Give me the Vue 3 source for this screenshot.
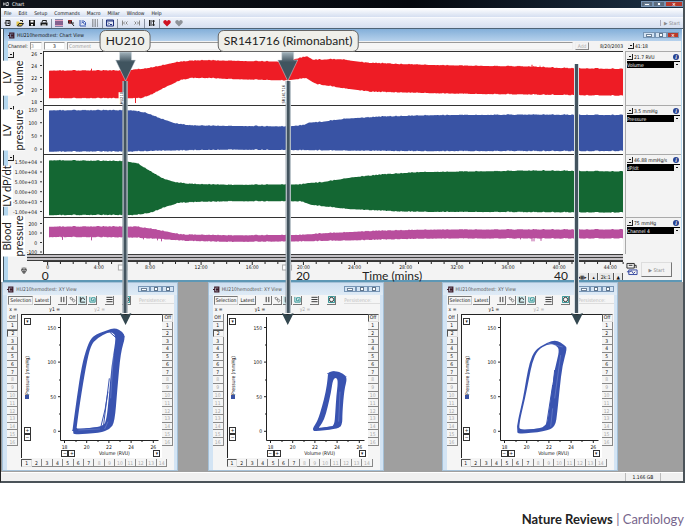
<template>
  <div class="page">
    <main class="app">
      <header class="app-title">
        <svg class="app-icon" viewBox="0 0 8 6"><path d="M1 1v4M1 3h2M4 1v4h3M5 1h2v4" /></svg>
        <span>Chart</span>
        <div class="window-buttons dark">
          <button aria-label="Minimize"><i class="line"></i></button>
          <button aria-label="Restore"><i class="box"></i></button>
          <button class="close" aria-label="Close">×</button>
        </div>
      </header>

      <nav class="menu">
        <button v-for="item in menu" :key="item">{{ item }}</button>
      </nav>

      <div class="toolbar">
        <template v-for="(icon, i) in tools" :key="i">
          <span v-if="icon === '|'" class="separator"></span>
          <button v-else class="tool" :aria-label="icon">
            <svg viewBox="0 0 16 16">
              <g v-if="icon === 'chart'"><path class="ink" d="M4 2v12M4 3h8v10H4M1 8h3M7 6h4M7 9h4" /></g>
              <g v-else-if="icon === 'open'"><path class="yellow" d="M1 5h5l1 2h7l-3 7H1z" /><path class="ink" d="M3 14l3-5h9l-4 5zM8 3h5v3" /></g>
              <g v-else-if="icon === 'save'"><path class="black" d="M2 2h12v12H2z" /><path class="white" d="M5 3h6v4H5zM6 10h4v3H6z" /></g>
              <g v-else-if="icon === 'print'"><path class="black" d="M1 7h14v6H1z" /><path class="ink" d="M4 7l1-4h8l-1 4" /><path class="white" d="M4 11h8v2H4z" /></g>
              <g v-else-if="icon === 'channels'"><path class="navy-fill" d="M0 1h16v14H0z" /><path class="pink" d="M0 2h16v3H0zM0 7h16v2H0zM0 11h16v3H0z" /></g>
              <g v-else-if="icon === 'find'"><path class="red" d="M2 2h8v7H2z" /><path class="ink" d="M3 4h6v4H3zM9 8l5 6M10 8h4" /></g>
              <g v-else-if="icon === 'xy'"><path class="blue" d="M2 2v12h12M5 4h5l3 3v5M5 8l3-2 3 5" /></g>
              <g v-else-if="icon === 'grid'"><path class="dash" d="M2 2h12M2 6h12M2 10h12M2 14h12" /></g>
              <g v-else-if="icon === 'panel'"><path class="navy" d="M1 2h14v12H1zM2 4h12M4 7l2 2-2 2M8 11h4" /></g>
              <g v-else-if="icon === 'first'"><path class="gray" d="M3 3v10M8 5L5 8l3 3M13 5l-3 3 3 3" /></g>
              <g v-else-if="icon === 'last'"><path class="gray" d="M13 3v10M3 5l3 3-3 3M8 5l3 3-3 3" /></g>
              <g v-else-if="icon === 'split'"><path class="ink" d="M3 2v12M6 2v12M11 3v10M9 5l2-3 2 3M9 11l2 3 2-3" /></g>
              <path v-else :class="icon" d="M8 15L1 8q-2-6 4-6 2 0 3 3 1-3 3-3 6 0 4 6z" />
            </svg>
          </button>
        </template>
        <button class="start-link" disabled>▶ <span>Start</span></button>
      </div>

      <section class="chart-window">
        <header class="window-title">
          <svg class="window-icon" viewBox="0 0 12 12"><path d="M3 1v10M3 2h7v8H3M0 6h3M5 5h4M5 7h4" /></svg>
          <span>HU210hemodtest: Chart View</span>
          <div class="window-buttons">
            <button aria-label="Minimize"><i class="line"></i></button>
            <button aria-label="Maximize"><i class="box"></i></button>
            <button class="close" aria-label="Close">×</button>
          </div>
        </header>

        <div class="comment-bar">
          <label for="channel">Channel:</label>
          <input id="channel" class="short" value="3" disabled />
          <input class="mid" value="3" aria-label="Number" />
          <input class="comment" placeholder="Comment" aria-label="Comment" />
          <button class="add" disabled>Add</button>
          <span class="date">8/20/2003</span>
          <div class="clock"><button class="drop" aria-label="Time options"></button>41:18</div>
        </div>

        <div v-for="ch in channels" :key="ch.name" class="channel" :class="ch.key">
          <div class="scale">
            <svg class="scale-svg">
              <g v-for="t in ch.ticks" :key="t.label">
                <text x="29" :y="t.y - ch.top + 2" text-anchor="end">{{ t.label }}</text>
                <path :d="`M32 ${t.y - ch.top}h2`" />
              </g>
            </svg>
            <button class="drop scale-menu" aria-label="Scale options"></button>
            <div class="side-label">
              <span v-for="line in ch.side" :key="line">{{ line }}</span>
            </div>
          </div>
          <svg class="trace" :viewBox="`43 ${ch.top} 579 ${ch.height}`" preserveAspectRatio="none">
            <path :d="ch.path" :fill="ch.color" />
            <path v-if="ch.spikes" :d="ch.spikes" :stroke="ch.color" />
          </svg>
          <div class="channel-panel">
            <div class="reading">
              <button class="drop" aria-label="Range"></button>
              <span>{{ ch.value }}</span>
              <i class="info">i</i>
            </div>
            <select :aria-label="ch.name"><option>{{ ch.name }}</option></select>
          </div>
        </div>

        <div class="dividers"><i></i><i></i><i></i></div>

        <div class="time-row">
          <div class="plug">
            <svg viewBox="0 0 10 12"><path d="M2 1v4M5 0v4M8 1v4M1 4h8v3H1zM3 7h4v3H3zM5 9v3" /></svg>
          </div>
          <div class="time-scale">
            <svg class="time-svg">
              <g v-for="t in times" :key="t.x">
                <line :x1="t.x + '%'" :x2="t.x + '%'" y1="0" :y2="t.label ? 3 : 2" />
                <text v-if="t.label" :x="t.x + '%'" y="7">{{ t.label }}</text>
              </g>
              <rect v-for="x in [13, 41.3]" :key="x" class="flag" :x="x + '%'" y="3" width="9" height="5" />
              <text v-for="t in bigTimes" :key="t.label" class="big" :x="t.x + '%'" y="18">{{ t.label }}</text>
            </svg>
            <div class="zoomers">
              <button>◂▩▸</button><button>▴</button><button>2k:1</button><button>▲</button>
            </div>
          </div>
          <div class="record">
            <svg viewBox="0 0 13 14"><path d="M1 1h8v5H1zM3 3h4M9 3h2v3" /><path class="screen" d="M3 8h9v5H3zM1 10h3l2-1 2 3 2-2" /></svg>
            <button disabled>▶ <span>Start</span></button>
          </div>
        </div>
      </section>

      <section class="desktop">
        <article v-for="(w, n) in loops" :key="n" class="xy-window" :style="{ left: w.left + '%' }">
          <header class="window-title pale">
            <svg class="window-icon" viewBox="0 0 12 12"><path d="M3 1v10M3 2h7v8H3M0 6h3M5 5h4M5 7h4" /></svg>
            <span>HU210hemodtest: XY View</span>
            <div class="window-buttons">
              <button aria-label="Minimize"><i class="line"></i></button>
              <button aria-label="Maximize"><i class="box"></i></button>
              <button aria-label="Close"><i class="box"></i></button>
            </div>
          </header>
          <div class="xy-tools">
            <button class="pressed">Selection</button>
            <button>Latest</button>
            <button class="icon first" aria-label="Pause"><svg viewBox="0 0 16 16"><path d="M5 2v12M11 2v12" /></svg></button>
            <button class="icon" aria-label="Link"><svg viewBox="0 0 16 16"><path class="gray" d="M2 4l4-1 3 4-4 2zM7 8l4-1 3 4-4 3z" /></svg></button>
            <button class="icon on" aria-label="Curve"><svg viewBox="0 0 16 16"><path d="M3 2v12h11M4 11q0-8 6-7l3 5" /></svg></button>
            <button class="icon" aria-label="Loop"><svg viewBox="0 0 16 16"><path class="teal" d="M2 2v12h12V4H6v7h5V7" /></svg></button>
            <button class="icon lines" aria-label="Grid"><svg viewBox="0 0 16 16"><path d="M1 3h14M1 8h14M1 13h14" /></svg></button>
            <button class="icon lens" aria-label="Zoom"><svg viewBox="0 0 16 16"><path class="teal" d="M1 1h14v14H1z" /><circle cx="8" cy="8" r="5" /></svg></button>
            <span class="persistence">Persistence:</span>
          </div>
          <div class="xy-values"><span>x =</span><span>y1 =</span><span class="faint">y2 =</span></div>
          <div class="xy-body">
            <div class="rail">
              <button v-for="b in rail" :key="b" :class="{ faint: b > 7, pressed: b === 2 }">{{ b }}</button>
            </div>
            <div class="xy-plot">
              <div class="axis-tools">
                <button class="mini" aria-label="Pressure options">▾</button>
                <span class="axis-name">Pressure (mmHg)</span>
                <i class="swatch"></i>
                <button class="mini plus" aria-label="Zoom in">+</button>
                <button class="mini" aria-label="Zoom out">−</button>
              </div>
              <svg class="loop" viewBox="12 0 130 135">
                <path class="axis" d="M40.500 2v123.500h98" />
                <g v-for="t in pressureTicks" :key="t.label">
                  <path class="axis" :d="`M38 ${t.y}h2.500`" />
                  <text x="36" :y="t.y + 2" text-anchor="end">{{ t.label }}</text>
                </g>
                <path class="axis" d="M39 30h1.500M39 65h1.500M39 99h1.500" />
                <g v-for="t in volumeTicks" :key="t.label">
                  <path class="axis" :d="`M${t.x} 125.500v2.500`" />
                  <text :x="t.x" y="134" text-anchor="middle">{{ t.label }}</text>
                </g>
                <path class="axis" d="M56 125.500v1.500M78 125.500v1.500M100 125.500v1.500M122 125.500v1.500" />
                <g transform="scale(.33333)">
                  <path class="ring" :d="smooth(w.outer) + smooth(w.inner)" />
                  <path class="strand" :d="w.strands" />
                  <path class="gap" :d="w.gaps" />
                </g>
              </svg>
              <div class="volume-tools">
                <button class="mini" aria-label="Zoom out">−</button>
                <button class="mini" aria-label="Zoom in">+</button>
                <span>Volume (RVU)</span>
                <button class="mini" aria-label="Volume options">▾</button>
              </div>
            </div>
            <div class="rail">
              <button v-for="b in rail" :key="b" :class="{ faint: b > 7, pressed: b === 'Off' }">{{ b }}</button>
            </div>
          </div>
          <div class="tabs">
            <button v-for="b in 14" :key="b" :class="{ faint: b > 7, pressed: b === 1 }">{{ b }}</button>
          </div>
        </article>
      </section>

      <footer class="status"><span></span><span class="size">1.166 GB</span><span></span></footer>

      <div v-for="m in markers" :key="m.left" class="marker" :class="{ plain: !m.label }" :style="{ left: m.left + '%' }">
        <div v-if="m.label" class="callout">{{ m.label }}</div>
        <svg v-if="m.label" class="head" viewBox="0 0 22 29">
          <defs>
            <linearGradient :id="'fade' + m.tag" x1="0" y1="0" x2="0" y2="1">
              <stop offset="0" stop-color="#a4b4bd" />
              <stop offset=".35" stop-color="#40545f" />
            </linearGradient>
          </defs>
          <path :fill="`url(#fade${m.tag})`" stroke="#d5dde2" stroke-width=".5" d="M5 0h12v8h4L11 29 1 8h4z" />
        </svg>
        <div class="shaft"></div>
        <svg class="tip" viewBox="0 0 12 12"><path d="M0 0l6 2 6-2-6 12z" /></svg>
        <span v-if="m.tag" class="tag">{{ m.tag }}</span>
      </div>
    </main>

    <p class="credit"><b>Nature Reviews</b> <span>| Cardiology</span></p>
  </div>
</template>

<script setup>
const menu = ['File', 'Edit', 'Setup', 'Commands', 'Macro', 'Millar', 'Window', 'Help'];
const tools = ['chart', 'open', 'save', 'print', '|', 'channels', 'find', 'xy', 'grid', '|', 'panel', '|', 'first', 'last', '|', 'split', '|', 'heart', 'heart-off'];
const rail = ['Off', ...Array.from({ length: 16 }, (_, i) => i + 1)];

const markers = [
  { left: 18.2, label: 'HU210', tag: 'HU210' },
  { left: 42.1, label: 'SR141716 (Rimonabant)', tag: 'SR141716' },
  { left: 84.4, label: '', tag: '' }
];

// height of a trace edge at x, linear between its points
function at(points, x) {
  for (let i = 1; i < points.length; i++) {
    const [x0, y0] = points[i - 1];
    const [x1, y1] = points[i];
    if (x <= x1) return y0 + ((y1 - y0) * (x - x0)) / (x1 - x0);
  }
  return points[points.length - 1][1];
}

// closed area between two edges, with a little signal noise
function band(top, bottom) {
  const up = [];
  const down = [];
  for (let x = 48; x <= 622; x++) {
    const noise = Math.abs(Math.sin(x * 12.9898) * 43758.5453) % 1;
    const jag = noise > 0.8 ? 0.7 : noise * 0.3;
    up.push(`${x} ${(at(top, x) - jag).toFixed(1)}`);
    down.unshift(`${x} ${(at(bottom, x) + 0.7 - jag).toFixed(1)}`);
  }
  return `M${up.join('L')}L${down.join('L')}Z`;
}

function ticks(labels, first, step) {
  return labels.map((label, i) => ({ label, y: first + i * step }));
}

const channels = [
  {
    key: 'one', name: 'Volume', value: '21.7 RVU', side: ['LV', 'volume'], top: 51, height: 54, color: '#ee1c25',
    ticks: ticks(['26', '24', '22', '20', '18'], 53.5, 12),
    path: band(
      [[48, 70], [125, 70], [140, 68.5], [150, 67], [160, 65], [175, 61.5], [190, 60], [205, 59.5], [225, 60], [282, 61], [295, 58], [306, 55.5], [312, 59], [340, 58.5], [365, 62], [400, 63.5], [458, 65], [530, 66], [560, 67.5], [622, 68.5]],
      [[48, 97.5], [140, 97.5], [150, 94], [165, 86], [180, 79], [190, 77], [210, 77], [228, 78], [285, 79.5], [305, 77], [315, 83], [340, 87], [370, 91], [458, 93], [622, 95]]
    ),
    spikes: 'M134.500 97v6M90.500 71v-3M531 66v-2M539 66v-1'
  },
  {
    key: 'two', name: 'Pressure', value: '3.5 mmHg', side: ['LV', 'pressure'], top: 105, height: 49, color: '#3953a4',
    ticks: ticks(['150', '100', '50', '0'], 109.5, 13.2),
    path: band(
      [[48, 109.5], [130, 109.5], [145, 112], [160, 118], [175, 123], [190, 125], [230, 125.5], [287, 126], [303, 124.5], [308, 122], [320, 121.5], [345, 118], [380, 116], [430, 114.5], [540, 114], [622, 114.5]],
      [[48, 151], [130, 151], [160, 150], [230, 149], [303, 149.5], [400, 150.5], [622, 150.5]]
    )
  },
  {
    key: 'three', name: 'dP/dt', value: '46.88 mmHg/s', side: ['LV dP/dt'], top: 154, height: 63, color: '#146733',
    ticks: ticks(['1.50e+04', '1.00e+04', '5.00e+03', '0.00e+00', '-5.00e+03', '-1.00e+04'], 162, 9.9),
    path: band(
      [[48, 159.5], [125, 160.5], [137, 163], [150, 171], [162, 178], [175, 182], [190, 183.5], [230, 184.5], [300, 184], [308, 182.5], [320, 182], [350, 177], [380, 174], [420, 171.5], [540, 170], [622, 171]],
      [[48, 214.5], [135, 214.5], [150, 212], [165, 206], [178, 202], [200, 201], [230, 200.5], [300, 200.5], [310, 204], [325, 206], [350, 208.5], [400, 211], [622, 212]]
    )
  },
  {
    key: 'four', name: 'Channel 4', value: '75 mmHg', side: ['Blood', 'pressure'], top: 217, height: 37, color: '#b84e9d',
    ticks: ticks(['200', '100', '0', '-100'], 223.5, 9.5),
    path: band(
      [[48, 226], [135, 226], [150, 228], [165, 231], [180, 234], [230, 235], [300, 234.5], [320, 233], [370, 230.5], [430, 229], [622, 229]],
      [[48, 236], [130, 236.5], [160, 238], [185, 240], [230, 241], [300, 240.5], [370, 239], [430, 237.5], [622, 237.5]]
    ),
    spikes: 'M61.500 236v3.500M90.500 236v4M142.500 236v3M156.500 237v3M160.500 238v3M519.500 237v2M531 237v4M533 237v4M540 237v3.500'
  }
];

// a tick each minute, labelled every four
const times = Array.from({ length: 46 }, (_, m) => ({
  x: 0.8 + m * 2.205,
  label: m % 4 ? '' : m ? m + ':00' : '0'
}));
const bigTimes = [
  { x: 0.4, label: '0' },
  { x: 44.8, label: '20' },
  { x: 60.2, label: 'Time (mins)' },
  { x: 89.3, label: '40' }
];

const pressureTicks = ticks(['150', '100', '50', '0'], 12.5, 34.6);
const volumeTicks = ['18', '20', '22', '24', '26'].map((label, i) => ({ label, x: 44.5 + i * 22.2 }));

// closed curve through the midpoints of a polygon
function smooth(text) {
  const p = text.split(' ').map((s) => s.split(',').map(Number));
  const mid = (a, b) => `${(a[0] + b[0]) / 2} ${(a[1] + b[1]) / 2}`;
  let d = `M${mid(p[p.length - 1], p[0])}`;
  p.forEach((a, i) => {
    d += `Q${a[0]} ${a[1]} ${mid(a, p[(i + 1) % p.length])}`;
  });
  return d + 'Z';
}

const loops = [
  {
    left: 0.2,
    outer: '158,345 158,340 170,252 185,152 202,92 218,62 260,46 285,38 308,50 316,67 302,112 292,222 284,322 270,342 240,354 160,359 160,350',
    inner: '170,342 170,336 180,262 198,152 212,92 230,70 268,50 285,57 287,77 274,152 267,242 260,312 250,336',
    strands: 'M156 346L250 336M250 337Q258 270 268 190M242 338Q258 280 264 230M270 52L292 72M300 54L314 66',
    gaps: 'M280 120L272 250M264 320L254 342M175 345L240 342'
  },
  {
    left: 30.3,
    outer: '261,344 261,338 275,317 289,272 299,232 305,192 306,172 327,167 352,175 364,190 355,222 349,292 349,334 327,342 265,350',
    inner: '276,339 282,334 295,312 305,277 315,232 321,192 332,187 336,202 331,242 328,292 325,332 309,336',
    strands: 'M262 343L345 332M304 176L325 170M360 184L350 210',
    gaps: 'M342 230L338 320'
  },
  {
    left: 64.6,
    outer: '171,335 172,330 176,306 189,251 199,191 209,141 224,106 259,83 289,74 314,91 322,99 307,151 299,221 292,291 286,336 254,349 172,358 172,345',
    inner: '178,344 178,330 182,306 195,251 207,191 217,141 232,106 264,86 289,90 299,106 284,161 275,231 266,291 260,336 214,343',
    strands: 'M266 338L284 165M258 339L278 210M285 83L315 98M176 348L250 341',
    gaps: 'M302 120L284 250M278 280L272 335M262 84L308 96'
  }
];
</script>

<style>
body {
  margin: 0;
  background: #fff;
}
</style>

<style scoped>
.page {
  font-family: "DejaVu Sans Condensed", "DejaVu Sans", sans-serif;
  font-size: 5px;
  line-height: 6px;
  color: #111;
}

button,
input,
select {
  font: inherit;
  color: inherit;
  margin: 0;
  padding: 0;
  border: 0;
  background: none;
  border-radius: 0;
  box-sizing: border-box;
}

svg {
  display: block;
  fill: none;
}

.app {
  position: relative;
  border-right: 2px solid #4b5359;
  border-bottom: 2px solid #4b5359;
  border-left: 1px solid #222;
}

/* main window bars */
.app-title {
  display: flex;
  align-items: center;
  gap: 3px;
  height: 8px;
  padding-left: 2px;
  background: linear-gradient(90deg, #11151b, #05080e 60%, #1c3044);
  color: #fff;
}

.app-icon {
  width: 6px;
  height: 6px;
  stroke: #fff;
}

.window-buttons {
  display: flex;
  margin-left: auto;
  margin-right: 3px;
}

.window-buttons button {
  display: flex;
  align-items: center;
  justify-content: center;
  width: 12px;
  height: 6px;
  border: 1px solid #7795b5;
  background: #d3e3f3;
}

.window-buttons .close {
  background: #b8392b;
  color: #fff;
  font-weight: bold;
}

.dark {
  margin-right: 0;
}

.dark button {
  background: #5c6b7c;
}

.dark .close {
  width: 18px;
}

.line {
  width: 4px;
  height: 1px;
  background: #fff;
  outline: 1px solid #6b8199;
}

.box {
  width: 2px;
  height: 2px;
  background: #fff;
  border: 1px solid #60758c;
}

.menu {
  display: flex;
  gap: 7px;
  height: 9px;
  padding-left: 3px;
  background: linear-gradient(#fff, #d5dff1);
  border-bottom: 1px solid #f7f9fd;
}

.toolbar {
  display: flex;
  align-items: center;
  gap: 4px;
  height: 10px;
  padding-left: 3px;
  background: linear-gradient(#eef2fa, #d6dff0);
  border-bottom: 1px solid #4f6477;
}

.tool,
.tool svg {
  width: 8px;
  height: 8px;
}

.separator {
  width: 1px;
  height: 9px;
  margin: 0 -1px;
  background: #8790a0;
}

.ink { stroke: #222; stroke-width: 2; }
.black { fill: #161616; }
.white { fill: #fff; }
.yellow { fill: #e6c84a; }
.pink { fill: #e5a0bf; }
.navy-fill { fill: #23235e; }
.red { fill: #d8303a; }
.blue { stroke: #3a5bb4; stroke-width: 2; }
.navy { stroke: #1c2f7c; stroke-width: 2; }
.gray { stroke: #888; stroke-width: 2; }
.teal { stroke: #198a8c; stroke-width: 2; }
.dash { stroke: #555; stroke-width: 2; stroke-dasharray: 3 2; }
.screen { stroke: #2b3f9b; }
.heart { fill: #cf1020; }
.heart-off { fill: #8e9298; }

.start-link {
  margin-left: auto;
  padding: 0 3px;
  border-left: 1px solid #aab;
  color: #888;
}

/* chart window */
.chart-window {
  margin: 0 1px 0 2px;
  padding: 0 1px 0 4px;
  border-left: 1px solid #41505c;
  border-bottom: 2px solid #5d97b5;
  background: #b4d7ef;
}

.window-title {
  display: flex;
  align-items: center;
  gap: 2px;
  height: 12px;
  margin: 0 -1px 0 -4px;
  padding-left: 4px;
  background: linear-gradient(#83afd9, #b6d1ec);
}

.window-icon {
  width: 7px;
  height: 7px;
  stroke: #3c1a28;
  stroke-width: 2;
}

.comment-bar {
  display: flex;
  align-items: center;
  gap: 2px;
  height: 10px;
  background: #f3f3f3;
}

.comment-bar input {
  height: 8px;
  border: 1px solid #999;
  border-right-color: #eee;
  border-bottom-color: #eee;
  background: #fff;
}

.comment-bar .short {
  width: 12px;
  color: #999;
}

.comment-bar .mid {
  width: 21px;
  text-align: center;
}

.comment-bar .comment {
  flex: 1;
  padding-left: 1px;
  background: #f6f6f6;
}

.comment::placeholder {
  color: #999;
}

.add {
  width: 14px;
  height: 8px;
  border: 1px solid #eee;
  border-right-color: #888;
  border-bottom-color: #888;
  color: #aaa;
}

.date {
  width: 32px;
  text-align: right;
}

.clock {
  display: flex;
  align-items: center;
  gap: 1px;
  width: 53px;
  margin-left: 3px;
}

.drop {
  width: 6px;
  height: 6px;
  border-right: 1px solid #222;
  border-bottom: 1px solid #222;
  background: linear-gradient(#111, #111) center / 2px 1px no-repeat #eee;
}

.channel {
  display: flex;
  background: #f3f3f3;
}

.one { height: 54px; }
.two { height: 49px; }
.three { height: 63px; }
.four { height: 37px; }

.scale {
  position: relative;
  width: 35px;
}

.scale-svg {
  width: 35px;
  height: 100%;
  overflow: hidden;
  stroke: #333;
}

.scale-svg text,
.time-svg text,
.loop text {
  fill: #111;
  stroke: none;
}

.scale-menu {
  position: absolute;
  top: 1px;
  left: 0;
}

.side-label {
  position: absolute;
  top: 50%;
  left: -7px;
  display: flex;
  flex-direction: column;
  writing-mode: vertical-rl;
  transform: translateY(-50%) rotate(180deg);
  font-family: Lato, sans-serif;
  font-size: 11px;
  line-height: 12px;
  text-align: center;
  color: #222;
}

.side-label span {
  background: #fff;
  white-space: nowrap;
}

.trace {
  flex: 1;
  min-width: 0;
  height: 100%;
  box-sizing: border-box;
  border-top: 1px solid #333;
  border-left: 1px solid #333;
  background: #fff;
}

.channel-panel {
  width: 56px;
  margin-left: 2px;
  padding: 2px 0 0 1px;
  border-top: 1px solid #aaa;
  border-left: 1px solid #aaa;
  box-sizing: border-box;
}

.reading {
  display: flex;
  align-items: center;
  gap: 1px;
  white-space: nowrap;
}

.info {
  width: 6px;
  height: 6px;
  margin-left: auto;
  margin-right: 2px;
  border-radius: 50%;
  background: #26418f;
  color: #fff;
  text-align: center;
  font-weight: bold;
}

.channel-panel select {
  display: block;
  width: 53px;
  height: 7px;
  margin-top: 1px;
  appearance: none;
  color: #fff;
  background: linear-gradient(#111, #111) 49px 3px / 2px 1px no-repeat, linear-gradient(#eee, #eee) right / 6px 6px no-repeat, #000;
}

.dividers {
  display: flex;
  flex-direction: column;
  gap: 2px;
  height: 7px;
  padding: 0 58px 0 19px;
  background: linear-gradient(#c5c2c6, #c5c2c6) content-box, #f3f3f3;
}

.dividers i {
  height: 1px;
  background: #3c3c3c;
}

.time-row {
  display: flex;
  height: 19px;
  background: #f3f3f3;
}

.plug {
  width: 35px;
}

.plug svg {
  width: 6px;
  height: 7px;
  margin: 6px 0 0 13px;
  stroke: #111;
}

.time-scale {
  position: relative;
  flex: 1;
  border-top: 1px solid #333;
}

.time-svg {
  width: 100%;
  height: 18px;
  overflow: visible;
  stroke: #222;
}

.time-svg text {
  text-anchor: middle;
}

.time-svg .big {
  font-family: Lato, sans-serif;
  font-size: 12px;
  fill: #222;
}

.flag {
  fill: #fff;
  stroke: #aaa;
}

.zoomers {
  position: absolute;
  right: 0;
  bottom: 0;
  display: flex;
  gap: 1px;
}

.zoomers button {
  height: 7px;
  padding: 0 2px;
  background: #e8e8e8;
  border-right: 1px solid #555;
}

.record {
  display: flex;
  gap: 3px;
  width: 55px;
  margin-left: 3px;
  padding-top: 1px;
}

.record svg {
  width: 12px;
  height: 14px;
  stroke: #222;
}

.record button {
  width: 31px;
  height: 15px;
  border: 1px solid #ddd;
  border-right-color: #777;
  border-bottom-color: #777;
  color: #888;
}

/* XY windows */
.desktop {
  position: relative;
  height: 190px;
  background: #9f9f9f;
}

.xy-window {
  position: absolute;
  top: 0;
  width: 176px;
  height: 189px;
  padding: 0 3px 0 4px;
  box-sizing: border-box;
  border: 1px solid #a5c1d8;
  background: linear-gradient(#f5f5f5, #f5f5f5) content-box, #d3e4f4;
}

.window-title.pale {
  margin: 0 -3px 0 -4px;
  background: linear-gradient(#cfdff0, #dfebf6);
  color: #555;
}

.xy-tools {
  display: flex;
  align-items: center;
  gap: 1px;
  height: 10px;
  padding-left: 1px;
}

.xy-tools button {
  height: 9px;
  padding: 0 1px;
  border-right: 1px solid #777;
  border-bottom: 1px solid #777;
}

.xy-tools .pressed {
  border: 1px solid #777;
  border-right-color: #ccc;
  border-bottom-color: #ccc;
}

.xy-tools .icon {
  width: 9px;
}

.icon svg {
  width: 7px;
  height: 7px;
  stroke: #222;
  stroke-width: 2;
}

.xy-tools .first { margin-left: 6px; }
.xy-tools .lines { margin-left: 7px; }
.xy-tools .lens { margin-left: 7px; }
.icon.on { background: #d6eef0; }

.persistence {
  flex: 1;
  margin-left: 7px;
  color: #bbb;
  border-bottom: 1px solid #ddd;
}

.xy-values {
  display: grid;
  grid-template-columns: 40px 45px 1fr;
  height: 9px;
  padding: 1px 0 0 2px;
  box-sizing: border-box;
}

.faint {
  color: #aaa;
}

.xy-body {
  display: grid;
  grid-template-columns: 12px 1fr 12px;
  height: 144px;
}

.rail {
  display: grid;
  grid-template-rows: repeat(17, 1fr);
  height: 132px;
}

.rail button,
.tabs button {
  border-right: 1px solid #888;
  border-bottom: 1px solid #888;
  line-height: 6px;
}

.rail .pressed,
.tabs .pressed {
  border: 1px solid #555;
  border-right-color: #ddd;
  border-bottom-color: #ddd;
  line-height: 5px;
}

.rail button {
  margin-right: 1px;
}

.xy-plot {
  display: grid;
  grid-template-columns: 10px 1fr;
  grid-template-rows: 135px 8px;
  margin-left: 2px;
  border-top: 1px solid #222;
  border-left: 1px solid #222;
  background: #fff;
}

.axis-tools {
  display: flex;
  flex-direction: column;
  align-items: center;
  padding-top: 3px;
}

.mini {
  width: 7px;
  height: 7px;
  border: 1px solid #333;
  line-height: 5px;
  text-align: center;
}

.axis-name {
  height: 50px;
  margin-top: 20px;
  writing-mode: vertical-rl;
  transform: rotate(180deg);
  white-space: nowrap;
}

.swatch {
  width: 4px;
  height: 4px;
  background: #3953a4;
}

.plus {
  margin-top: 28px;
}

.loop {
  width: 100%;
  height: 135px;
}

.axis {
  stroke: #222;
}

.ring {
  fill: #3953b0;
  fill-rule: evenodd;
}

.strand {
  stroke: #3953b0;
  stroke-width: 3;
}

.gap {
  stroke: #a5b2e4;
  stroke-width: 1;
}

.volume-tools {
  grid-column: 2;
  display: flex;
  padding: 0 2px 0 29px;
}

.volume-tools span {
  flex: 1;
  text-align: center;
}

.tabs {
  display: grid;
  grid-template-columns: repeat(14, 1fr);
  height: 8px;
  margin: 1px 7px 0 14px;
}

/* status bar */
.status {
  display: flex;
  justify-content: flex-end;
  height: 8px;
  background: #f0f0f0;
  border-top: 1px solid #fff;
  line-height: 8px;
}

.status .size {
  width: 34px;
  border: solid #bbb;
  border-width: 0 1px;
  text-align: center;
}

.status span:last-child {
  width: 22px;
}

/* drug markers */
.marker {
  position: absolute;
  top: 30px;
  height: 295px;
  display: flex;
  flex-direction: column;
  align-items: center;
  transform: translateX(-50%);
}

.marker.plain {
  top: 64px;
  height: 261px;
}

.callout {
  height: 22px;
  padding: 0 5px;
  box-sizing: border-box;
  border: 1px solid #666;
  border-radius: 6px;
  background: #efefea;
  font-family: Lato, sans-serif;
  font-size: 12px;
  line-height: 20px;
  color: #222;
  white-space: nowrap;
}

.head {
  width: 22px;
  height: 29px;
  flex: none;
}

.shaft {
  flex: 1;
  width: 3px;
  border: solid #d5dde2;
  border-width: 0 1px;
  background: #43545f;
}

.tip {
  width: 12px;
  height: 12px;
  fill: #33474f;
}

.tag {
  position: absolute;
  right: 50%;
  bottom: 221px;
  margin-right: 2px;
  writing-mode: vertical-rl;
  transform: rotate(180deg);
  background: #fff;
  font-size: 4px;
  line-height: 5px;
}

.credit {
  margin: 0;
  padding: 28px 1px 0 0;
  text-align: right;
  font-family: Lato, sans-serif;
  font-size: 13px;
  line-height: 16px;
  color: #222;
}

.credit span {
  color: #77668c;
}
</style>
